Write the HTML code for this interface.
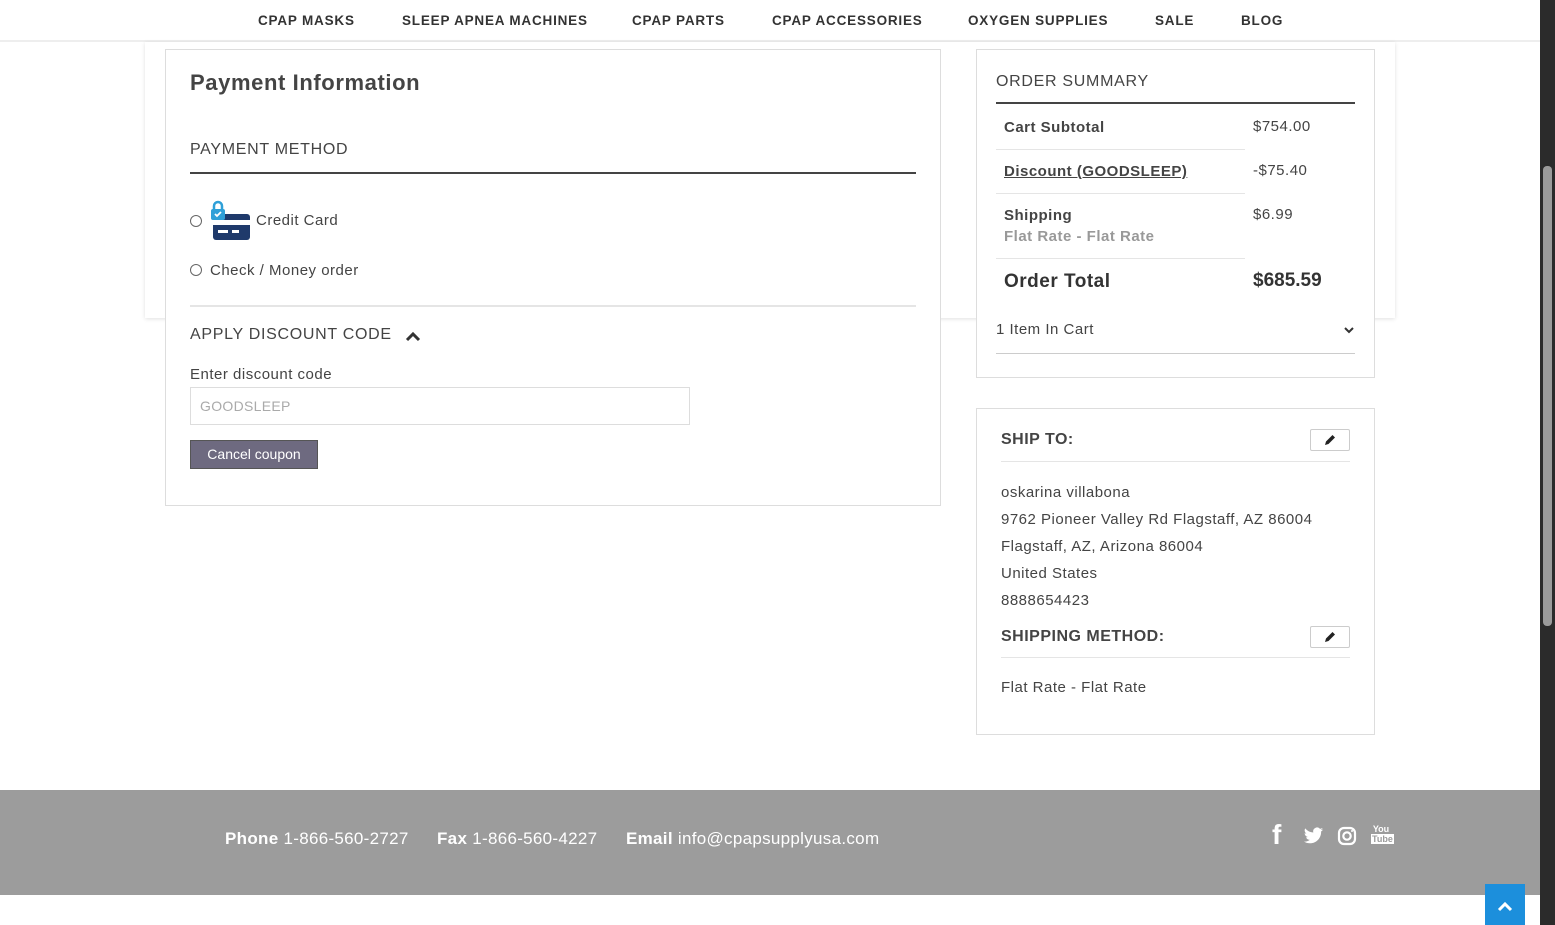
<!DOCTYPE html>
<html><head><meta charset="utf-8"><style>
*{box-sizing:border-box;margin:0;padding:0}
body{width:1555px;height:925px;overflow:hidden;background:#fff;font-family:"Liberation Sans",sans-serif;color:#333;position:relative}
.abs{position:absolute}
.nav{left:0;top:0;width:1540px;height:42px;background:#fff;border-bottom:2px solid #eee}
.nav span{position:absolute;top:13px;font-size:13.5px;font-weight:bold;letter-spacing:0.8px;color:#333}
.bgcard{left:145px;top:42px;width:1250px;height:276px;background:#fff;box-shadow:0 1px 4px rgba(0,0,0,.12)}
.box{border:1px solid #ddd;background:#fff}
.t{font-size:15px;color:#444;letter-spacing:0.5px}
.b{font-weight:bold}
.scroll{left:1540px;top:0;width:15px;height:925px;background:#2b2b2b}
.thumb{left:1543px;top:166px;width:9px;height:460px;background:#9b9b9b;border-radius:4px}
.edit{width:40px;height:22px;border:1px solid #ccc;border-radius:2px;background:#fff}
.radio{width:12px;height:12px;border:1px solid #666;border-radius:50%}
</style></head><body>
<div class="abs nav">
<span style="left:258px">CPAP MASKS</span>
<span style="left:402px">SLEEP APNEA MACHINES</span>
<span style="left:632px">CPAP PARTS</span>
<span style="left:772px">CPAP ACCESSORIES</span>
<span style="left:968px">OXYGEN SUPPLIES</span>
<span style="left:1155px">SALE</span>
<span style="left:1241px">BLOG</span>
</div>
<div class="abs bgcard"></div>

<div class="abs box" style="left:165px;top:49px;width:776px;height:457px"></div>
<div class="abs b" style="left:190px;top:70px;font-size:22px;color:#444;letter-spacing:0.6px">Payment Information</div>
<div class="abs t" style="left:190px;top:141px;font-size:16px;letter-spacing:0.7px">PAYMENT METHOD</div>
<div class="abs" style="left:190px;top:172px;width:726px;height:2px;background:#444"></div>
<div class="abs radio" style="left:190px;top:215px"></div>
<svg class="abs" style="left:209px;top:200px" width="43" height="41" viewBox="0 0 43 41">
<rect x="4" y="14" width="37" height="26" rx="3" fill="#1f3a6b"/>
<rect x="4" y="20" width="37" height="5" fill="#fff"/>
<rect x="9" y="30" width="10" height="3" fill="#fff"/><rect x="23" y="30" width="7" height="3" fill="#fff"/>
<path d="M5 9 V6 a4 4 0 0 1 8 0 V9" stroke="#2fa0d8" stroke-width="2.5" fill="none"/>
<rect x="2" y="9" width="14" height="11" rx="2" fill="#2fa0d8"/>
<path d="M6 14 l2 2 l4 -4" stroke="#fff" stroke-width="1.8" fill="none"/>
</svg>
<div class="abs t" style="left:256px;top:212px">Credit Card</div>
<div class="abs radio" style="left:190px;top:264px"></div>
<div class="abs t" style="left:210px;top:262px">Check / Money order</div>
<div class="abs" style="left:190px;top:305px;width:726px;height:2px;background:#e5e5e5"></div>
<div class="abs t" style="left:190px;top:326px;font-size:16px;letter-spacing:0.7px">APPLY DISCOUNT CODE</div>
<svg class="abs" style="left:405px;top:330px" width="16" height="12" viewBox="0 0 16 12"><path d="M2 10 L8 4 L14 10" stroke="#333" stroke-width="3" fill="none"/></svg>
<div class="abs t" style="left:190px;top:366px">Enter discount code</div>
<div class="abs" style="left:190px;top:387px;width:500px;height:38px;border:1px solid #ddd"></div>
<div class="abs" style="left:200px;top:398px;font-size:14px;color:#aaa;letter-spacing:0.3px">GOODSLEEP</div>
<div class="abs" style="left:190px;top:440px;width:128px;height:29px;background:#6e6a80;border:1px solid #555;color:#fff;font-size:14px;text-align:center;line-height:27px">Cancel coupon</div>

<div class="abs box" style="left:976px;top:49px;width:399px;height:329px"></div>
<div class="abs t" style="left:996px;top:73px;font-size:16px;letter-spacing:0.7px">ORDER SUMMARY</div>
<div class="abs" style="left:996px;top:102px;width:359px;height:2px;background:#444"></div>
<div class="abs t b" style="left:1004px;top:119px">Cart Subtotal</div>
<div class="abs t" style="left:1253px;top:118px">$754.00</div>
<div class="abs" style="left:996px;top:149px;width:249px;height:1px;background:#e5e5e5"></div>
<div class="abs t b" style="left:1004px;top:163px;text-decoration:underline">Discount (GOODSLEEP)</div>
<div class="abs t" style="left:1253px;top:162px">-$75.40</div>
<div class="abs" style="left:996px;top:193px;width:249px;height:1px;background:#e5e5e5"></div>
<div class="abs t b" style="left:1004px;top:207px">Shipping</div>
<div class="abs t b" style="left:1004px;top:228px;color:#999">Flat Rate - Flat Rate</div>
<div class="abs t" style="left:1253px;top:206px">$6.99</div>
<div class="abs" style="left:996px;top:258px;width:249px;height:1px;background:#e5e5e5"></div>
<div class="abs b" style="left:1004px;top:271px;font-size:19px;color:#333;letter-spacing:0.5px">Order Total</div>
<div class="abs b" style="left:1253px;top:270px;font-size:19px;color:#333">$685.59</div>
<div class="abs t" style="left:996px;top:321px">1 Item In Cart</div>
<svg class="abs" style="left:1343px;top:326px" width="12" height="9" viewBox="0 0 12 9"><path d="M2 2 L6 6 L10 2" stroke="#333" stroke-width="2" fill="none"/></svg>
<div class="abs" style="left:996px;top:353px;width:359px;height:1px;background:#ccc"></div>

<div class="abs box" style="left:976px;top:408px;width:399px;height:327px"></div>
<div class="abs t b" style="left:1001px;top:431px;font-size:16px">SHIP TO:</div>
<div class="abs edit" style="left:1310px;top:429px"></div>
<svg class="abs" style="left:1322px;top:432px" width="16" height="16" viewBox="0 0 16 16"><path d="M3 13 L4 9.5 L10.5 3 L13 5.5 L6.5 12 Z" fill="#222"/></svg>
<div class="abs" style="left:1001px;top:461px;width:349px;height:1px;background:#e5e5e5"></div>
<div class="abs t" style="left:1001px;top:479px;line-height:27px">oskarina villabona<br>9762 Pioneer Valley Rd Flagstaff, AZ 86004<br>Flagstaff, AZ, Arizona 86004<br>United States<br>8888654423</div>
<div class="abs t b" style="left:1001px;top:628px;font-size:16px">SHIPPING METHOD:</div>
<div class="abs edit" style="left:1310px;top:626px"></div>
<svg class="abs" style="left:1322px;top:629px" width="16" height="16" viewBox="0 0 16 16"><path d="M3 13 L4 9.5 L10.5 3 L13 5.5 L6.5 12 Z" fill="#222"/></svg>
<div class="abs" style="left:1001px;top:657px;width:349px;height:1px;background:#e5e5e5"></div>
<div class="abs t" style="left:1001px;top:679px">Flat Rate - Flat Rate</div>

<div class="abs" style="left:0;top:790px;width:1540px;height:105px;background:#9c9c9c"></div>
<div class="abs" style="left:225px;top:829px;color:#fff;font-size:17px;letter-spacing:0.3px"><b>Phone</b> 1-866-560-2727</div>
<div class="abs" style="left:437px;top:829px;color:#fff;font-size:17px;letter-spacing:0.3px"><b>Fax</b> 1-866-560-4227</div>
<div class="abs" style="left:626px;top:829px;color:#fff;font-size:17px;letter-spacing:0.3px"><b>Email</b> info@cpapsupplyusa.com</div>
<div class="abs b" style="left:1272px;top:819px;color:#fff;font-size:28px">f</div>
<svg class="abs" style="left:1303px;top:827px" width="21" height="18" viewBox="0 0 24 20"><path d="M23 2.5a9 9 0 0 1-2.6.7 4.6 4.6 0 0 0 2-2.5 9 9 0 0 1-2.9 1.1A4.5 4.5 0 0 0 11.8 6 12.8 12.8 0 0 1 2.5 1.3a4.5 4.5 0 0 0 1.4 6 4.5 4.5 0 0 1-2-.6 4.5 4.5 0 0 0 3.6 4.5 4.5 4.5 0 0 1-2 .1 4.5 4.5 0 0 0 4.2 3.1A9 9 0 0 1 1 16.3 12.8 12.8 0 0 0 7.9 18.3c8.3 0 12.8-6.9 12.8-12.8v-.6A9 9 0 0 0 23 2.5z" fill="#fff"/></svg>
<svg class="abs" style="left:1337px;top:826px" width="20" height="20" viewBox="0 0 20 20"><rect x="2" y="2" width="16" height="16" rx="5" stroke="#fff" stroke-width="2.2" fill="none"/><circle cx="10" cy="10" r="3.7" stroke="#fff" stroke-width="2.2" fill="none"/><circle cx="15" cy="5" r="1" fill="#fff"/></svg>
<div class="abs" style="left:1371px;top:824px;width:20px;height:24px;color:#fff;font-size:9px;font-weight:bold;line-height:10px;text-align:center">You<br><span style="background:#fff;color:#9c9c9c;padding:0 1px">Tube</span></div>
<div class="abs" style="left:1485px;top:884px;width:40px;height:41px;background:#1c8fdc"></div>
<svg class="abs" style="left:1496px;top:900px" width="18" height="12" viewBox="0 0 18 12"><path d="M3 10 L9 4 L15 10" stroke="#fff" stroke-width="3" fill="none"/></svg>

<div class="abs scroll"></div>
<div class="abs thumb"></div>
</body></html>
